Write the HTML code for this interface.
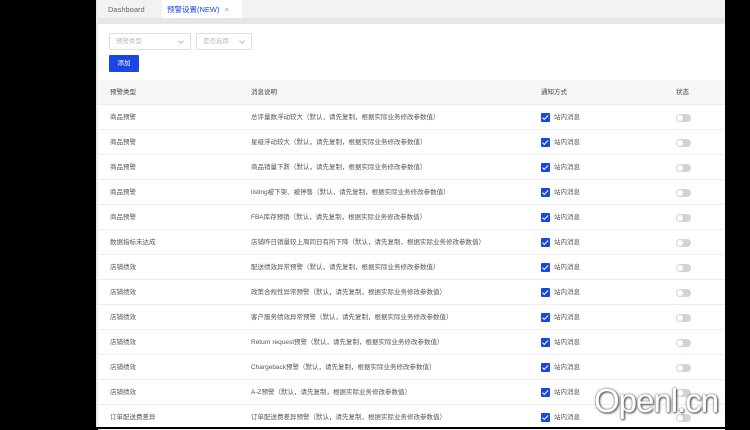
<!DOCTYPE html>
<html><head><meta charset="utf-8"><style>
*{margin:0;padding:0;box-sizing:border-box}
body{width:750px;height:427px;background:#000;position:relative;overflow:hidden;font-family:"Liberation Sans","Noto Sans CJK SC",sans-serif;font-size:7px;color:#555}
.main{position:absolute;left:96px;top:0;width:629px;height:427px;background:#fff;border-left:2px solid #e8e8e8}
.tabs{height:18px;background:#f2f2f2;position:relative}
.tab{position:absolute;top:0;height:18px;line-height:19px;font-size:7.5px;color:#666}
.strip{height:6px;background:#e6e6e6}
.sel{position:absolute;top:33px;height:17px;border:1px solid #dcdfe6;border-radius:2px;color:#bbb;font-size:6.5px;line-height:15px;padding-left:6px}
.sel:after{content:"";position:absolute;right:7px;top:5px;width:3px;height:3px;border-right:1px solid #bbb;border-bottom:1px solid #bbb;transform:rotate(45deg)}
.btn{position:absolute;left:11px;top:55px;width:30px;height:17px;background:#1a47e0;color:#fff;font-size:6.5px;line-height:17px;text-align:center;border-radius:1px}
.row{position:absolute;left:0;width:627px;height:25px;border-bottom:1px solid #ebeef5;line-height:25px;font-size:6.5px;color:#555}
.row span{position:absolute;top:0}
.hd{background:#f5f6f8;color:#444;height:25px}
.cb{position:absolute;top:8px;left:443px;width:9px;height:9px;background:#1a47e0;border-radius:1px}
.cb:after{content:"";position:absolute;left:3px;top:1px;width:2px;height:4.5px;border-right:1.3px solid #fff;border-bottom:1.3px solid #fff;transform:rotate(45deg)}
.tg{position:absolute;top:9px;left:578px;width:15px;height:8px;border-radius:4px;background:#d0d3d9}
.tg:after{content:"";position:absolute;left:1px;top:1px;width:6px;height:6px;border-radius:50%;background:#fff}
.wm{position:absolute;left:594px;top:382px;font-size:33px;color:#fff;font-family:"Liberation Sans",sans-serif;text-shadow:0 0 2px #555,1px 1px 2px #444;letter-spacing:-1px}
</style></head><body>
<div class="main">
<div class="tabs"><div class="tab" style="left:10px">Dashboard</div><div class="tab" style="left:64px;width:80px;background:#fff;padding-left:5px;color:#1a47e0">预警设置(NEW) <span style="color:#999;margin-left:3px">×</span></div></div>
<div class="strip"></div>
<div class="sel" style="left:11px;width:82px">预警类型</div>
<div class="sel" style="left:98px;width:56px">是否启用</div>
<div class="btn">添加</div>
<div class="row hd" style="top:80px"><span style="left:12px">预警类型</span><span style="left:153px">消息说明</span><span style="left:443px">通知方式</span><span style="left:578px">状态</span></div>
<div id="rows"></div>
</div>
<script>
var d=[["商品预警","总评量数浮动较大（默认，请先复制，根据实际业务修改参数值）"],["商品预警","星级浮动较大（默认，请先复制，根据实际业务修改参数值）"],["商品预警","商品销量下跌（默认，请先复制，根据实际业务修改参数值）"],["商品预警","listing被下架、被停售（默认，请先复制，根据实际业务修改参数值）"],["商品预警","FBA库存预销（默认，请先复制，根据实际业务修改参数值）"],["数据指标未达成","店铺昨日销量较上周同日有所下降（默认，请先复制，根据实际业务修改参数值）"],["店铺绩效","配送绩效异常预警（默认，请先复制，根据实际业务修改参数值）"],["店铺绩效","政策合规性异常预警（默认，请先复制，根据实际业务修改参数值）"],["店铺绩效","客户服务绩效异常预警（默认，请先复制，根据实际业务修改参数值）"],["店铺绩效","Return request预警（默认，请先复制，根据实际业务修改参数值）"],["店铺绩效","Chargeback预警（默认，请先复制，根据实际业务修改参数值）"],["店铺绩效","A-Z预警（默认，请先复制，根据实际业务修改参数值）"],["订单配送费差异","订单配送费差异预警（默认，请先复制，根据实际业务修改参数值）"]];
var h="";d.forEach(function(r,i){h+='<div class="row" style="top:'+(105+i*25)+'px"><span style="left:12px">'+r[0]+'</span><span style="left:153px">'+r[1]+'</span><div class="cb"></div><span style="left:456px">站内消息</span><div class="tg"></div></div>'});
document.getElementById("rows").outerHTML=h;
</script>
<div class="wm">Openl.cn</div>
</body></html>
